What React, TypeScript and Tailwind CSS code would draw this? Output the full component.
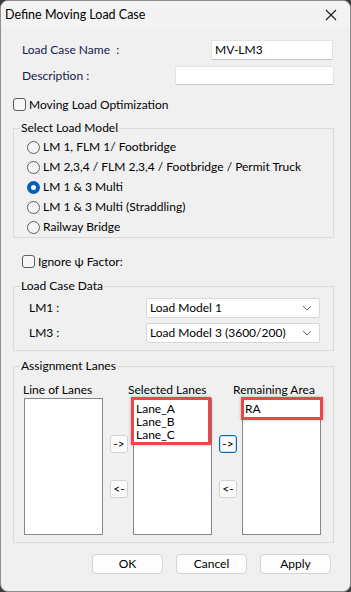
import React from "react";

const font = { fontFamily: 'Lato, "Noto Sans", Arial, sans-serif' };

function Radio({ checked, label }: { checked?: boolean; label: string }) {
  return (
    <div className="flex h-[20px] items-center">
      {checked ? (
        <span className="flex h-[13px] w-[13px] items-center justify-center rounded-full bg-[#005fb8]">
          <span className="h-[5px] w-[5px] rounded-full bg-white" />
        </span>
      ) : (
        <span className="h-[13px] w-[13px] rounded-full border border-[#5d5d5d] bg-[#f5f5f5]" />
      )}
      <span className="ml-[3px] text-black">{label}</span>
    </div>
  );
}

function Check({ label }: { label: string }) {
  return (
    <div className="flex h-[13px] items-center">
      <span className="h-[13px] w-[13px] rounded-[3px] border border-[#5d5d5d] bg-[#f7f7f7]" />
      <span className="ml-[3px] text-black">{label}</span>
    </div>
  );
}

function Group({ title, className, children }: { title: string; className: string; children?: React.ReactNode }) {
  return (
    <div className={"relative border border-[#dadada] " + className}>
      <span className="absolute left-[6px] top-[-9px] bg-[#f0f0f0] px-[1px] leading-[16px] text-black">{title}</span>
      {children}
    </div>
  );
}

function Chevron() {
  return (
    <svg width="10" height="6" viewBox="0 0 10 6" className="mr-[7px]">
      <path d="M1 1 L5 5 L9 1" fill="none" stroke="#6b6b6b" strokeWidth="1" />
    </svg>
  );
}

function Select({ value }: { value: string }) {
  return (
    <div className="flex h-[20px] w-[174px] items-center justify-between rounded-[2px] border border-[#d6d6d6] bg-white pl-[3px]">
      <span className="text-black">{value}</span>
      <Chevron />
    </div>
  );
}

function SmallBtn({ label, active }: { label: string; active?: boolean }) {
  return (
    <div
      className={
        "flex h-[18px] w-[18px] items-center justify-center rounded-[3px] bg-[#fbfbfb] text-[12px] leading-none text-black " +
        (active ? "border border-[#0067c0] shadow-[inset_0_0_0_1px_#cfe3f7]" : "border border-[#d3d3d3]")
      }
    >
      {label}
    </div>
  );
}

function BottomBtn({ label }: { label: string }) {
  return (
    <div className="flex h-[20px] w-[71px] items-center justify-center rounded-[4px] border border-[#d3d3d3] bg-[#fdfdfd] text-black">
      {label}
    </div>
  );
}

export default function App() {
  return (
    <div className="h-[592px] w-[351px] bg-[#3c3c3c] text-[12px] leading-[14px]" style={font}>
      <div className="flex h-[592px] w-[351px] flex-col overflow-hidden rounded-[8px] border border-[#8f8f8f] bg-[#f0f0f0]">
        {/* title bar */}
        <div className="flex h-[27px] items-center justify-between bg-[#f3f3f3] pl-[4px] pr-[13px]">
          <span className="text-[12.5px] text-black">Define Moving Load Case</span>
          <svg width="12" height="12" viewBox="0 0 12 12">
            <path d="M1 1 L11 11 M11 1 L1 11" stroke="#1a1a1a" strokeWidth="1.1" fill="none" />
          </svg>
        </div>

        <div className="flex flex-col pl-[12px] pr-[16px]">
          {/* Load case name */}
          <div className="mt-[12px] flex h-[20px] items-center justify-between">
            <span className="ml-[9px] text-[#13204d]">Load Case Name&nbsp;&nbsp;:</span>
            <div className="mr-[1px] flex h-[20px] w-[122px] items-center border border-[#e3e3e3] border-b-[#c8c8c8] bg-white pl-[3px] text-black">
              MV-LM3
            </div>
          </div>
          {/* description */}
          <div className="mt-[6px] flex h-[19px] items-center justify-between">
            <span className="ml-[9px] text-[#13204d]">Description :</span>
            <div className="h-[19px] w-[159px] border border-[#e3e3e3] border-b-[#c8c8c8] bg-white" />
          </div>
          {/* optimization */}
          <div className="mt-[13px]">
            <Check label="Moving Load Optimization" />
          </div>

          {/* Select Load Model */}
          <Group title="Select Load Model" className="mt-[17px] h-[110px] pl-[13px] pt-[8px]">
            <Radio label="LM 1, FLM 1/ Footbridge" />
            <Radio label="LM 2,3,4 / FLM 2,3,4 / Footbridge / Permit Truck" />
            <Radio checked label="LM 1 & 3 Multi" />
            <Radio label="LM 1 & 3 Multi (Straddling)" />
            <Radio label="Railway Bridge" />
          </Group>

          {/* ignore psi */}
          <div className="ml-[9px] mt-[17px]">
            <Check label="Ignore ψ Factor:" />
          </div>

          {/* Load Case Data */}
          <Group title="Load Case Data" className="mt-[18px] flex h-[65px] flex-col gap-[5px] pl-[15px] pr-[13px] pt-[11px]">
            <div className="flex h-[20px] items-center justify-between">
              <span className="text-black">LM1 :</span>
              <Select value="Load Model 1" />
            </div>
            <div className="flex h-[20px] items-center justify-between">
              <span className="text-black">LM3 :</span>
              <Select value="Load Model 3 (3600/200)" />
            </div>
          </Group>

          {/* Assignment Lanes */}
          <Group title="Assignment Lanes" className="mt-[15px] h-[177px] pl-[9px] pt-[15px]">
            <div className="flex h-[16px] items-center text-black">
              <span className="w-[105px]">Line of Lanes</span>
              <span className="w-[105px]">Selected Lanes</span>
              <span>Remaining Area</span>
            </div>
            <div className="flex">
              <div className="ml-[1px] h-[137px] w-[79px] border border-[#82868f] bg-white" />
              <div className="ml-[7px] flex flex-col pt-[37px]">
                <SmallBtn label="->" />
                <div className="mt-[27px]">
                  <SmallBtn label="<-" />
                </div>
              </div>
              <div className="relative ml-[5px] h-[137px] w-[79px] border border-[#82868f] bg-white">
                <div className="flex flex-col pl-[2px] pt-[3px] text-black">
                  <span className="h-[13px] leading-[13px]">Lane_A</span>
                  <span className="h-[13px] leading-[13px]">Lane_B</span>
                  <span className="h-[13px] leading-[13px]">Lane_C</span>
                </div>
                <div className="absolute left-[-3px] top-[-2px] h-[48px] w-[80px] border-[3px] border-[#f04646] shadow-[0_0_3px_rgba(0,0,0,0.25)]" />
              </div>
              <div className="ml-[7px] flex flex-col pt-[37px]">
                <SmallBtn label="->" active />
                <div className="mt-[27px]">
                  <SmallBtn label="<-" />
                </div>
              </div>
              <div className="relative ml-[5px] h-[137px] w-[79px] border border-[#82868f] bg-white">
                <div className="pl-[2px] pt-[3px] text-black">RA</div>
                <div className="absolute left-[-2px] top-[-2px] h-[23px] w-[82px] border-[3px] border-[#f04646] shadow-[0_0_3px_rgba(0,0,0,0.25)]" />
              </div>
            </div>
          </Group>

          {/* Bottom buttons */}
          <div className="mt-[11px] flex justify-end gap-[13px] pr-[3px]">
            <BottomBtn label="OK" />
            <BottomBtn label="Cancel" />
            <BottomBtn label="Apply" />
          </div>
        </div>
      </div>
    </div>
  );
}
